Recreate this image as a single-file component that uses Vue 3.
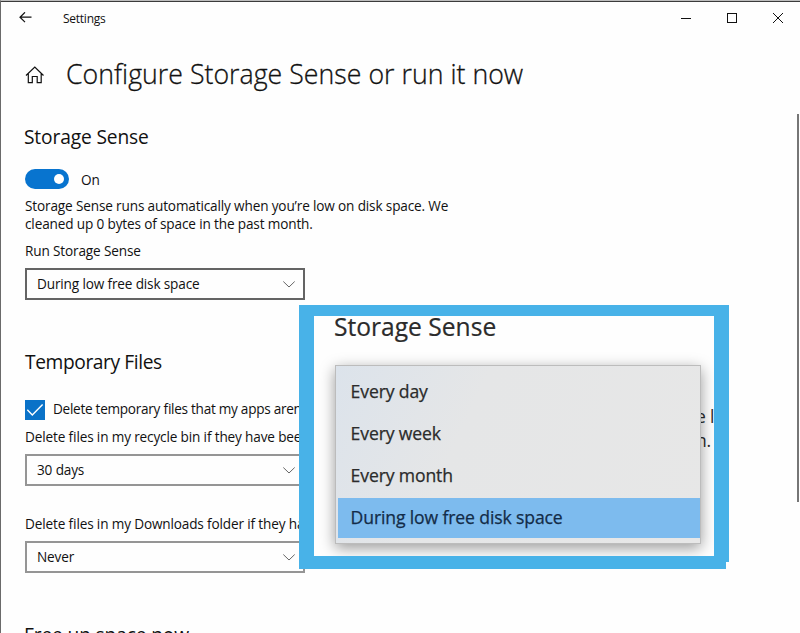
<script setup>
import { ref } from 'vue'

const storageSense = ref(true)
const deleteTemp = ref(true)

const schedule = ref('During low free disk space')
const recycleBin = ref('30 days')
const downloads = ref('Never')

const options = ['Every day', 'Every week', 'Every month', 'During low free disk space']
</script>

<template>
  <div class="window">
    <header class="titlebar">
      <svg class="back" width="14" height="12" viewBox="0 0 14 12">
        <path d="M6 .3 L1 5.2 L6 10.1 M1 5.2 H12.5" />
      </svg>
      <span class="app-name">Settings</span>
      <div class="controls">
        <svg width="10" height="10" viewBox="0 0 10 10"><path d="M0 5.5 H10" /></svg>
        <svg width="10" height="10" viewBox="0 0 10 10"><rect x=".5" y=".5" width="9" height="9" /></svg>
        <svg width="10" height="10" viewBox="0 0 10 10"><path d="M0 0 L10 10 M10 0 L0 10" /></svg>
      </div>
    </header>

    <div class="page-title">
      <svg class="home" width="19" height="18" viewBox="0 0 19 18">
        <path d="M1 9.5 L9.8 1 L18.5 9.5 M3.3 7.6 V16.6 H7.3 V10.5 H12.2 V16.6 H16.2 V7.6" />
      </svg>
      <h1>Configure Storage Sense or run it now</h1>
    </div>

    <main class="content">
      <h2>Storage Sense</h2>
      <div class="toggle-row" @click="storageSense = !storageSense">
        <span class="toggle" :class="{ on: storageSense }"><i class="knob"></i></span>
        <span class="state">{{ storageSense ? 'On' : 'Off' }}</span>
      </div>
      <p class="status">Storage Sense runs automatically when you’re low on disk space. We<br>cleaned up 0 bytes of space in the past month.</p>
      <p class="label run">Run Storage Sense</p>
      <div class="select active">
        <span>{{ schedule }}</span>
        <svg width="12" height="7" viewBox="0 0 12 7"><path d="M.3 .5 L6 6 L11.7 .5" /></svg>
      </div>

      <h2 class="temp">Temporary Files</h2>
      <div class="check-row" @click="deleteTemp = !deleteTemp">
        <span class="checkbox">
          <svg v-if="deleteTemp" width="20" height="20" viewBox="0 0 20 20"><path d="M2.3 9.8 L7.3 15 L17.6 4.6" /></svg>
        </span>
        <span class="check-label">Delete temporary files that my apps aren</span>
      </div>
      <p class="label">Delete files in my recycle bin if they have bee</p>
      <div class="select">
        <span>{{ recycleBin }}</span>
        <svg width="12" height="7" viewBox="0 0 12 7"><path d="M.3 .5 L6 6 L11.7 .5" /></svg>
      </div>
      <p class="label downloads">Delete files in my Downloads folder if they ha</p>
      <div class="select">
        <span>{{ downloads }}</span>
        <svg width="12" height="7" viewBox="0 0 12 7"><path d="M.3 .5 L6 6 L11.7 .5" /></svg>
      </div>

      <h2 class="free">Free up space now</h2>
    </main>

    <div class="scrollbar"></div>

    <!-- enlarged view of the open dropdown -->
    <aside class="callout">
      <div class="callout-body">
        <h3>Storage Sense</h3>
        <div class="behind"><span>e l</span><span>n.</span></div>
        <ul class="menu">
          <li v-for="o in options" :key="o" :class="{ selected: o === schedule }" @click="schedule = o">{{ o }}</li>
        </ul>
      </div>
    </aside>
  </div>
</template>

<style>
body {
  margin: 0;
  overflow: hidden;
}
</style>

<style scoped>
.window {
  position: relative;
  box-sizing: border-box;
  width: 800px;
  height: 633px;
  overflow: hidden;
  background: #fefefe;
  border-left: 1px solid #6a6a6a;
  border-top: 1px solid #bdbdbd;
  box-shadow: inset 0 1px #3c3c3c;
  font-family: "Open Sans", "Noto Sans", sans-serif;
  font-size: 13.6px;
  line-height: 18px;
  letter-spacing: -0.15px;
  color: #111;
  font-feature-settings: "liga" 1;
}
h1, h2, h3, p, ul { margin: 0; padding: 0; font-weight: 400; }
svg { fill: none; stroke: #111; flex: none; }

.titlebar {
  display: flex;
  align-items: center;
  height: 33px;
  padding: 0 17px 2px 18px;
}
.back { stroke-width: 1.2; }
.app-name {
  margin: 2px 0 0 30px;
  font-size: 12px;
  letter-spacing: -0.25px;
}
.controls {
  display: flex;
  gap: 36px;
  margin-left: auto;
}

.page-title {
  display: flex;
  align-items: center;
  height: 36px;
  margin-top: 20px;
  padding-left: 24px;
}
.home { stroke-width: 1.2; margin-top: 1px; }
h1 {
  margin-left: 22px;
  font-size: 26.7px;
  font-weight: 300;
  line-height: 36px;
  letter-spacing: 0.03px;
  -webkit-text-stroke: 0.3px #111;
  white-space: nowrap;
}

.content {
  display: flex;
  flex-direction: column;
  width: 460px;
  padding: 33px 0 0 24px;
}
h2 {
  font-size: 19.2px;
  line-height: 24px;
  letter-spacing: -0.15px;
  white-space: nowrap;
  margin-left: -1px;
}
.toggle-row {
  display: flex;
  align-items: center;
  gap: 12px;
  height: 20px;
  margin-top: 20px;
}
.toggle {
  box-sizing: border-box;
  display: flex;
  align-items: center;
  width: 44px;
  height: 20px;
  padding: 0 5px;
  border-radius: 10px;
  background: #888;
}
.toggle.on { background: #0874cf; justify-content: flex-end; }
.knob {
  width: 10px;
  height: 10px;
  border-radius: 50%;
  background: #fff;
}
.state { padding-top: 2px; }
.status { margin-top: 8px; white-space: nowrap; }
.label { white-space: nowrap; margin-top: 8px; }
.label.run { margin-top: 9px; }
.select {
  box-sizing: border-box;
  display: flex;
  align-items: center;
  justify-content: space-between;
  width: 280px;
  height: 32px;
  margin-top: 8px;
  padding: 0 8px 0 10px;
  border: 2px solid #959595;
}
.select.active { border-color: #646464; }
.select svg { stroke: #666; stroke-width: 1; }
.temp { margin: 50px 0 0; letter-spacing: -0.4px; }
.check-row {
  display: flex;
  align-items: center;
  gap: 8px;
  height: 20px;
  margin-top: 26px;
  white-space: nowrap;
}
.check-label { padding-bottom: 2px; letter-spacing: -0.28px; }
.checkbox {
  width: 20px;
  height: 20px;
  background: #0a72c8;
}
.checkbox svg { display: block; stroke: #fff; stroke-width: 1.4; }
.label.downloads { margin-top: 29px; }
.free { margin-top: 50px; letter-spacing: -0.15px; }

.scrollbar {
  position: absolute;
  top: 113px;
  right: 1px;
  width: 2px;
  height: 388px;
  background: #767676;
}

.callout {
  position: absolute;
  left: 298px;
  top: 304px;
  box-sizing: border-box;
  width: 430px;
  height: 264px;
  padding: 11px 15px 13px;
  background: #48b2e8;
  clip-path: polygon(0 0, 100% 0, 100% 257px, 427px 257px, 427px 100%, 0 100%);
}
.callout-body {
  position: relative;
  height: 240px;
  overflow: hidden;
  background: #fefefe;
  color: #2b2b2b;
}
h3 {
  padding-left: 20px;
  font-size: 24.6px;
  line-height: 21px;
  letter-spacing: 0;
  -webkit-text-stroke: 0.2px #2b2b2b;
}
.menu {
  position: absolute;
  left: 21px;
  top: 49px;
  box-sizing: border-box;
  width: 366px;
  height: 179px;
  padding: 6px 0 0 2px;
  border: 1px solid #bcbcbc;
  background: linear-gradient(115deg, #dce3eb 0, #e5e6e7 35%, #e7e7e7 100%);
  box-shadow: 0 4px 14px rgba(0, 0, 0, 0.4);
  list-style: none;
  font-size: 17.6px;
  letter-spacing: -0.13px;
  -webkit-text-stroke: 0.25px currentColor;
}
.menu li {
  height: 41.9px;
  padding-left: 12.6px;
  line-height: 39px;
}
.menu .selected {
  height: 40px;
  background: #7dbbee;
  color: #132c48;
  line-height: 38.5px;
}
.behind {
  position: absolute;
  left: 382px;
  top: 88px;
  display: flex;
  flex-direction: column;
  font-size: 17.5px;
  line-height: 24px;
  white-space: nowrap;
}
</style>
